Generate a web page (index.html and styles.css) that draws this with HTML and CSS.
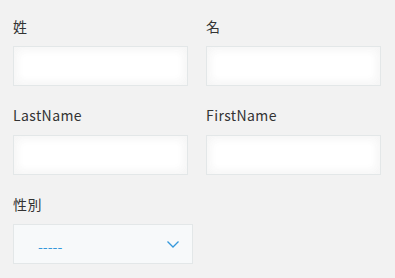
FILE: index.html
```html
<!DOCTYPE html>
<html lang="ja">
<head>
    <meta charset="UTF-8">
    <meta name="viewport" content="width=device-width, initial-scale=1.0">
    <title>Form</title>
    <link rel="stylesheet" href="styles.css">
</head>
<body>
    <div class="form">
        <!-- 名前 -->
        <div class="row">
            <div class="field">
                <label class="field-label">姓</label>
                <input type="text" class="text-input">
            </div>
            <div class="field">
                <label class="field-label">名</label>
                <input type="text" class="text-input">
            </div>
        </div>

        <!-- ローマ字 -->
        <div class="row">
            <div class="field">
                <label class="field-label">LastName</label>
                <input type="text" class="text-input">
            </div>
            <div class="field">
                <label class="field-label">FirstName</label>
                <input type="text" class="text-input">
            </div>
        </div>

        <!-- 性別 -->
        <div class="row">
            <div class="field">
                <label class="field-label">性別</label>
                <div class="select">
                    <span class="select-value">-----</span>
                    <svg class="select-arrow" width="12" height="7" viewBox="0 0 12 7">
                        <polyline points="0.5,0.5 6,6 11.5,0.5" fill="none" stroke="#3498db" stroke-width="1.3"/>
                    </svg>
                </div>
            </div>
        </div>
    </div>
</body>
</html>
```

FILE: styles.css
```css
* {
    margin: 0;
    padding: 0;
    box-sizing: border-box;
}

body {
    background-color: #f2f2f2;
    font-family: "Noto Sans CJK JP", "Noto Sans", sans-serif;
    color: #333;
}

.form {
    padding: 16px 13px 0;
    display: flex;
    flex-direction: column;
    gap: 19px;
}

.row {
    display: flex;
    gap: 18px;
}

.field {
    display: flex;
    flex-direction: column;
}

.field-label {
    font-size: 14px;
    line-height: 20px;
    letter-spacing: 0.4px;
    margin-bottom: 10px;
}

/* テキスト入力 */
.text-input {
    width: 175px;
    height: 40px;
    border: 1px solid #e3e7e8;
    background-color: #fff;
    box-shadow: 1px 1px 12px #f5f5f5 inset, -1px -1px 12px #f5f5f5 inset;
    outline: none;
}

/* ドロップダウン */
.select {
    width: 180px;
    height: 40px;
    border: 1px solid #e3e7e8;
    background-color: #f7f9fa;
    display: flex;
    align-items: center;
    justify-content: space-between;
    padding: 0 13px 0 24px;
}

.select-value {
    color: #3498db;
    font-size: 14px;
    line-height: 1;
    padding-top: 3px;
}
```
